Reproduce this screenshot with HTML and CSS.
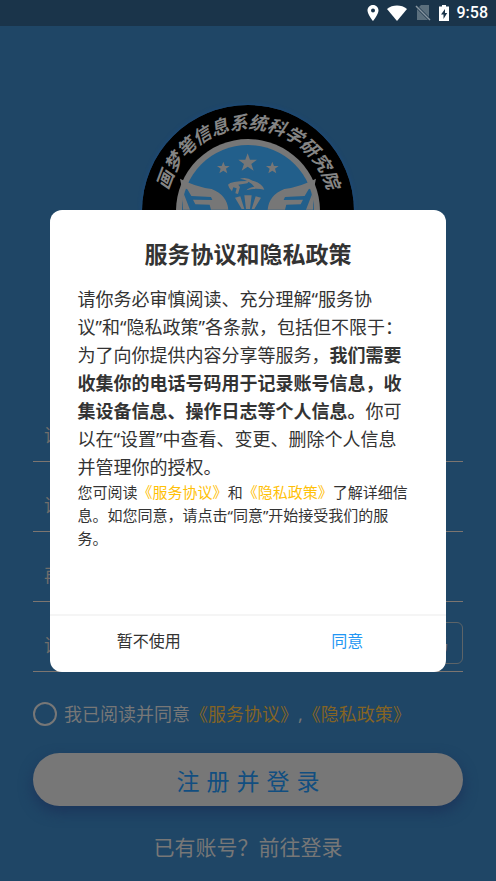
FILE: index.html
```html
<!DOCTYPE html>
<html lang="zh-CN">
<head>
<meta charset="utf-8">
<meta name="viewport" content="width=device-width, initial-scale=1">
<title>注册并登录</title>
<link rel="stylesheet" href="styles.css">
</head>
<body>
<header class="status">
  <svg class="status-icon" viewBox="0 0 12 16" width="12" height="16"><path fill="#fff" fill-rule="evenodd" d="M6 0C2.700 0 .5 2.500.5 5.500.5 9.500 6 16 6 16s5.500-6.500 5.500-10.500C11.500 2.500 9.300 0 6 0zm0 3.500a2 2 0 1 1 0 4 2 2 0 0 1 0-4z"/></svg>
  <svg class="status-icon" viewBox="0 0 20 16" width="20" height="16"><path fill="#fff" d="M0 4C5.500-.6 14.500-.6 20 4L10 16z"/></svg>
  <svg class="status-icon" viewBox="0 0 16 16" width="16" height="16"><path fill="#5b6f7d" d="M6 0h8v12L4 2zM2 4l11 11H2z"/><path stroke="#8795a0" stroke-width="1.500" d="M1 1l14 14"/></svg>
  <svg class="status-icon" viewBox="0 0 10 16" width="10" height="16"><path fill="#fff" fill-rule="evenodd" d="M3 0h4v1.500h3V16H0V1.500h3zM6 4L2 9.500h2.500V14L8.200 8H6z"/></svg>
  <time class="clock">9:58</time>
</header>

<main class="page">
  <svg class="logo" viewBox="0 0 212 212" width="212" height="212" role="img" aria-label="画梦笔信息系统科学研究院">
    <defs><path id="arc" d="M24 106a82 82 0 0 1 164 0"/></defs>
    <circle cx="106" cy="106" r="106" fill="#000"/>
    <circle cx="106" cy="106" r="72" fill="#777"/>
    <circle cx="106" cy="106" r="66" fill="#225f8b"/>
    <text class="logo-text" text-anchor="middle"><textPath href="#arc" startOffset="50%">画梦笔信息系统科学研究院</textPath></text>
    <g transform="scale(.3333) translate(-36 -45)" fill="#777">
      <path d="M353 190l7 19h21l-17 13 7 20-18-12-18 12 7-20-17-13h21z"/>
      <path d="M280 215l5 13h14l-11 8 4 14-12-8-12 8 4-14-11-8h14z"/>
      <path d="M427 215l5 13h14l-11 8 4 14-12-8-12 8 4-14-11-8h14z"/>
      <path d="M294 284q10-12 64-11l-6 7-27 4 5 7-6 21-8-2 4-15-10-3-4 12q-9-8-12-20z"/>
      <path d="M330 266q20-6 38 6 28 8 35 27-28-7-54 2 8-9 24-11-16-20-43-24z"/>
      <path id="wing" fill-rule="evenodd" d="M150 266q45 24 95 31 46 18 50 62H180L157 300zM162 294l10 4 12 20 59 3 4 9-58-1 7 14 43 1 4 15h-84q-2-32 3-65z"/>
      <use href="#wing" transform="matrix(-1 0 0 1 708 0)"/>
      <path d="M343 316h22l-5 41h-12zM315 323l16-4 12 38h-8zM393 323l-16-4-12 38h8z"/>
    </g>
  </svg>

  <form class="form">
    <div class="field"><input type="tel" aria-label="手机号" placeholder="请输入手机号"></div>
    <div class="field"><input type="password" aria-label="密码" placeholder="请输入密码"></div>
    <div class="field"><input type="password" aria-label="确认密码" placeholder="再次输入密码"></div>
    <div class="field"><input type="text" aria-label="验证码" placeholder="请输入验证码"><button class="code" type="button">获取验证码</button></div>
    <div class="agree">
      <input type="checkbox" id="agree">
      <label for="agree">我已阅读并同意<a href="#">《服务协议》</a>,<a href="#">《隐私政策》</a></label>
    </div>
    <button class="submit" type="submit">注册并登录</button>
  </form>
  <a class="login" href="#">已有账号？前往登录</a>
</main>

<div class="overlay">
  <section class="dialog" role="dialog" aria-modal="true" aria-labelledby="title">
    <div class="content">
      <h1 id="title">服务协议和隐私政策</h1>
      <p class="terms">请你务必审慎阅读、充分理解“服务协<br>议”和“隐私政策”各条款，包括但不限于：<br>为了向你提供内容分享等服务，<strong>我们需要<br>收集你的电话号码用于记录账号信息，收<br>集设备信息、操作日志等个人信息。</strong>你可<br>以在“设置”中查看、变更、删除个人信息<br>并管理你的授权。</p>
      <p class="detail">您可阅读<a href="#">《服务协议》</a>和<a href="#">《隐私政策》</a>了解详细信<br>息。如您同意，请点击“同意”开始接受我们的服<br>务。</p>
    </div>
    <div class="actions">
      <button type="button">暂不使用</button>
      <button class="accept" type="button">同意</button>
    </div>
  </section>
</div>
</body>
</html>
```
FILE: styles.css
```css
* { box-sizing: border-box; }
body {
  margin: 0;
  min-height: 100vh;
  background: #1f4666;
  color: #777;
  font-family: "Noto Sans", "Noto Sans CJK SC", sans-serif;
}
a { color: inherit; text-decoration: none; }
button, input { font: inherit; color: inherit; background: none; border: 0; padding: 0; }
button { cursor: pointer; }

.status {
  display: flex;
  justify-content: flex-end;
  align-items: center;
  height: 26px;
  padding-right: 8px;
  background: #1a344a;
}
.status-icon { margin-right: 8px; }
.clock {
  color: #fff;
  font: 500 16px/28px Roboto, sans-serif;
}

.page {
  display: flex;
  flex-direction: column;
  align-items: center;
  padding: 79px 33px 16px;
}
.logo { border-radius: 50%; box-shadow: 0 0 4px #1b4a82; }
.logo-text { font-size: 18px; font-weight: 700; font-style: italic; fill: #858585; }

.form { width: 100%; margin-top: 75px; }
.field {
  display: flex;
  align-items: flex-end;
  height: 70px;
  padding-bottom: 7px;
  border-bottom: 1px solid #7c7570;
}
.field input {
  flex: 1;
  min-width: 0;
  height: 38px;
  padding-left: 11px;
  font-size: 18px;
}
.field input::placeholder { color: #6f6d6b; opacity: 1; }
.code {
  height: 42px;
  padding: 0 14px;
  border: 1px solid #5d6468;
  border-radius: 6px;
  font-size: 16px;
}

.agree {
  display: flex;
  align-items: center;
  gap: 7px;
  margin-top: 28px;
  font-size: 18px;
  line-height: 28px;
}
.agree input {
  appearance: none;
  width: 24px;
  height: 24px;
  margin: 0;
  border: 2px solid #777;
  border-radius: 50%;
}
.agree a { color: #856424; }

.submit {
  width: 100%;
  height: 53px;
  margin-top: 25px;
  padding-left: 7px;
  border-radius: 27px;
  background: #777;
  color: #114e80;
  font-size: 23px;
  letter-spacing: 7px;
  box-shadow: 0 6px 14px #1c355b;
}
.login { margin-top: 26px; font-size: 21px; line-height: 30px; }

.overlay {
  position: fixed;
  inset: 0;
  display: flex;
  align-items: center;
  justify-content: center;
}
.dialog {
  width: 80%;
  border-radius: 12px;
  background: #fff;
  color: #333;
}
.content { padding: 27px 28px 64px; }
h1 {
  margin: 0 0 14px;
  font-size: 23px;
  line-height: 34px;
  text-align: center;
}
p { margin: 0; white-space: nowrap; }
.terms { font-size: 18px; line-height: 28px; }
.detail { font-size: 15px; line-height: 23px; }
.detail a { color: #ffc107; }
.actions {
  display: flex;
  border-top: 2px solid #f5f5f5;
}
.actions button {
  flex: 1;
  height: 56px;
  padding-bottom: 8px;
  font-size: 16px;
}
.actions .accept { color: #2196f3; }
```
